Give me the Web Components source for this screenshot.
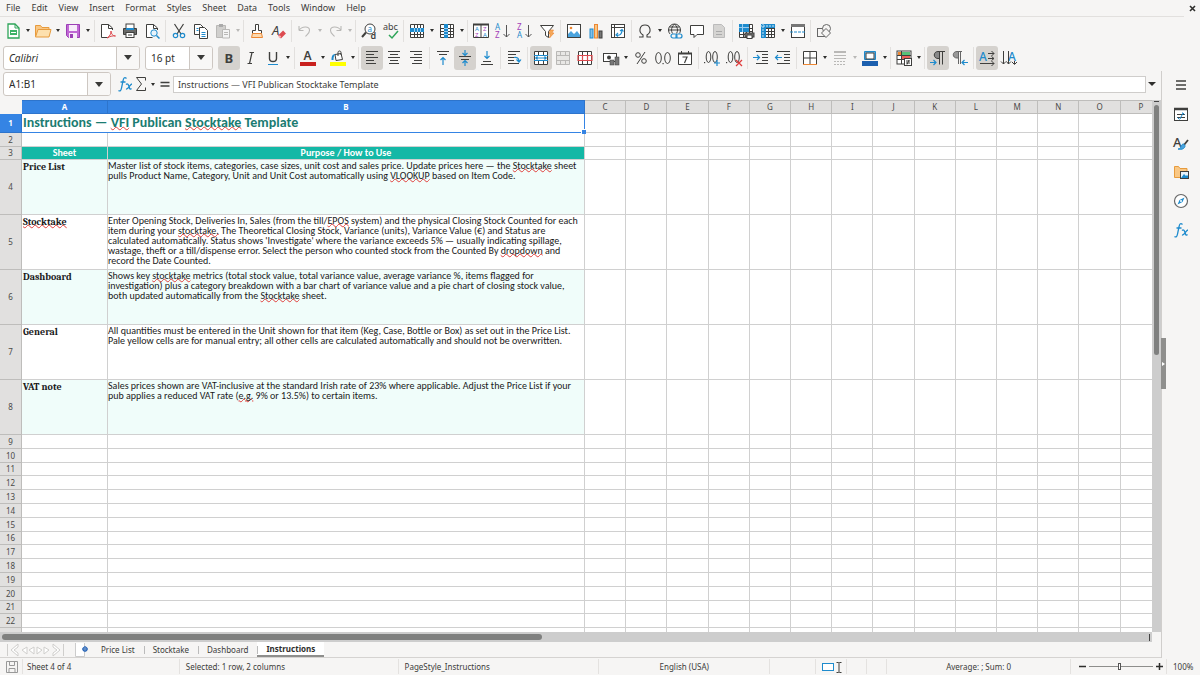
<!DOCTYPE html>
<html lang="en">
<head>
<meta charset="utf-8">
<title>VFI Publican Stocktake Template</title>
<style>
html,body{margin:0;height:100%}
body{font-family:"Noto Sans","Open Sans",sans-serif;font-size:9px;color:#3c3c3a;background:#f6f5f4;overflow:hidden}
</style>
</head>
<body>
<calc-app></calc-app>
<script>
const K='#3f3f3d',B='#1e8bcd',G='#b9b8b6';
const st=(c,w=1)=>`fill="none" stroke="${c}" stroke-width="${w}"`;
const lines=(a,c=K)=>`<path ${st(c)} d="${a.map(([x1,x2,y])=>`M${x1} ${y}.5H${x2}`).join('')}"/>`;
const tbl=(c)=>`<rect x="1" y="1" width="14" height="14" fill="#fff"/><path ${st(c)} d="M1.5 1.5h13v13h-13zM1.5 5.5h13M1.5 8.5h13M1.5 11.5h13M5.5 1.5v13M8.5 1.5v13M11.5 1.5v13"/>`;
const merge=(c,f,mid)=>`<rect x="1" y="1" width="14" height="14" fill="${f}"/><path ${st(c)} d="M1.5 1.5h13v13h-13zM1.5 5.5h13M1.5 10.5h13M5.5 1.5v4M10.5 1.5v4M5.5 10.5v4M10.5 10.5v4"/>${mid}`;
const txt=(s,x,y,z,c=K,w=400,style='normal')=>`<text x="${x}" y="${y}" font-size="${z}" fill="${c}" font-weight="${w}" font-style="${style}" font-family="Noto Sans">${s}</text>`;
const az=(a,ca,b,cb)=>txt(a,0,7,8,ca)+txt(b,0,15,8,cb)+`<path ${st('#555')} d="M11.500 2v12M8.500 11l3 3 3-3"/>`;
const P='#a33fb8';
const ICONS={
new:`<path fill="#fff" stroke="#2fa559" stroke-width="1.300" d="M3 1h7l4 4v10H3z"/><path fill="none" stroke="#2fa559" d="M10 1v4h4"/><rect x="5" y="7" width="7" height="5" fill="#3cb266"/><path stroke="#fff" d="M6 9.500h5" fill="none"/>`,
open:`<path fill="#f9c784" stroke="#e79b3c" d="M.5 13.500v-11h5l1.500 2h7v3"/><path fill="#fde0ae" stroke="#e79b3c" d="M.5 14l2.500-7.500h13L14 14z"/>`,
save:`<path fill="#c067d4" stroke="#9b3fb5" d="M1.500 1.500h13v13h-11l-2-2z"/><rect x="4" y="2" width="8" height="6" fill="#f7ecfa"/><rect x="4" y="10" width="8" height="5" fill="#f7ecfa"/><rect x="5" y="11" width="3" height="4" fill="#9b3fb5"/>`,
pdf:`<path fill="#fff" stroke="${K}" d="M12.500 7V5l-4-3.500h-7v13h7"/><path ${st(K)} d="M8.500 1.500v4h4"/><path ${st('#dd4b50',1)} d="M7 15c3-2 4-4 4-7 0 3 2 5 4.500 5-3-.5-6 .5-8.500 2z"/>`,
print:`<rect x="4" y="1" width="8" height="5" fill="#fff" stroke="${K}"/><path fill="#6a6a68" stroke="${K}" d="M1.500 5.500h13v6h-13z"/><path stroke="${B}" stroke-width="2" d="M4 6h8"/><rect x="4" y="9.500" width="8" height="5" fill="#fff" stroke="${K}"/><path stroke="${K}" d="M6 12h4"/>`,
preview:`<path fill="#fff" stroke="${K}" d="M13.500 7V5l-4-3.500h-7v13h6"/><path ${st(K)} d="M9.500 1.500v4h4"/><circle cx="10" cy="10" r="3.200" fill="#e7f3fb" stroke="${B}"/><path stroke="${B}" stroke-width="1.500" d="M12.500 12.500l3 3"/>`,
cut:`<path ${st(K,1.2)} d="M3.500 1l6.500 10M12.500 1L6 11"/><circle cx="4.500" cy="12.500" r="2.200" ${st(B,1.2)}/><circle cx="11.500" cy="12.500" r="2.200" ${st(B,1.2)}/>`,
copy:`<path fill="#fff" stroke="${K}" d="M1.500 1.500h6l3 3v7h-9z"/><path fill="#fff" stroke="${K}" d="M6.500 4.500h5l3 3v8h-8z"/><path stroke="${B}" d="M8.500 9.500h4M8.500 11.500h4M8.500 13.500h4M3.500 5.500h2M3.500 7.500h2"/>`,
paste:`<path fill="#d0cfcd" stroke="${G}" d="M1.500 2.500h9v12h-9z"/><rect x="4" y="1" width="4" height="3" fill="#aaa"/><path fill="#f4f4f4" stroke="${G}" d="M7.500 6.500h7v8.500h-7z"/><path stroke="${G}" d="M9 9.500h4M9 11.500h4"/>`,
brush:`<path fill="#fff" stroke="${K}" d="M6.500 1.500h3v6h3v3h-9v-3h3z"/><path fill="#fbd9b0" stroke="#ed8733" d="M3.500 10.500h9l1 4h-11z"/>`,
clear:`${txt('A',1,12,13,K,400,'italic')}<path stroke="#dd4b50" stroke-width="4" d="M8.500 14l5-5"/><path stroke="#f9b3b6" stroke-width="2" d="M8 14.500l1.500-1.500"/>`,
undo:`<path ${st(G,1.1)} d="M2 7.500h4.500M2 7.500V3M2 7.500c3-5 11-4.500 10.500 0 0 2.500-2 3.500-4 6"/>`,
redo:`<path ${st(G,1.1)} d="M14 7.500H9.500M14 7.500V3M14 7.500c-3-5-11-4.500-10.500 0 0 2.500 2 3.500 4 6"/>`,
find:`<circle cx="9" cy="6" r="5" fill="#fff" stroke="${K}"/><path stroke="${K}" stroke-width="2" d="M5 9.500L1 14"/>${txt('a',6.5,9,8,B)}${txt('d',9.5,16,9,K,600)}`,
spell:`${txt('abc',0,7,9)}<path ${st('#2fa559',1.5)} d="M6 12l3 3 6-7"/>`,
row:`${tbl(K)}<rect x="1" y="5" width="14" height="4" fill="${B}"/><path stroke="#9ccdf0" d="M5.500 5v4M8.500 5v4M11.500 5v4"/>`,
col:`${tbl(K)}<rect x="5" y="1" width="4" height="14" fill="${B}"/><path stroke="#9ccdf0" d="M5 5.500h4M5 8.500h4M5 11.500h4"/>`,
sort:`<path fill="#fff" stroke="${K}" d="M.5 1.500h15v13H.5z"/><path stroke="${K}" stroke-width="2" d="M0 1.500h16"/><path stroke="${K}" d="M8 2v12"/>${txt('A',2,8,6,B)}${txt('Z',2,14,6,P)}${txt('Z',10,8,6,P)}${txt('A',10,14,6,B)}`,
az:az('A',B,'Z',P),
za:az('Z',P,'A',B),
filter:`<path fill="#fff" stroke="${K}" d="M1.500 2.500h13l-5 6v6l-3-2v-4z"/><path fill="#f6a95a" stroke="#ed8733" stroke-width=".6" d="M11 7h3.500L13 10h2l-4.500 5 1-4H10z"/>`,
image:`<rect x="1.500" y="1.500" width="13" height="13" fill="#fff" stroke="${K}"/><path fill="#4aa3dd" d="M2 14v-3l3-3 3 3 3-3 3 4v2z"/><circle cx="5" cy="5" r="1.300" fill="#ed8733"/>`,
chart:`<rect x="2" y="6" width="3" height="9" fill="#83bfe8" stroke="${B}"/><rect x="6.500" y="1.500" width="3" height="13.500" fill="#f9c784" stroke="#ed8733"/><rect x="11" y="8" width="3" height="7" fill="#777" stroke="${K}"/>`,
pivot:`<rect x="1.500" y="1.500" width="13" height="13" fill="#fff" stroke="${K}"/><path stroke="${K}" d="M2 4.500h12M4.500 2v12"/><path ${st(B,1.2)} d="M6 12c4 1 6-1 6-5M10 8l2-1.500 1.500 2M8 10l-2 2 2 1.500"/>`,
omega:`<path ${st(K,1.1)} d="M2 14h4v-2C1 9 2.500 2 8 2s7 7 2 10v2h4"/>`,
link:`<circle cx="7.500" cy="7" r="6" ${st(K)}/><path ${st(K)} d="M1.500 7h12M2.500 4h10M7.500 1c-4 4-4 8 0 12M7.500 1c4 4 4 8 0 12"/><rect x="3" y="10.500" width="14" height="5.500" fill="#f6f5f4"/><rect x="4" y="11" width="6" height="4" rx="2" ${st(B,1.2)}/><rect x="9" y="11" width="6" height="4" rx="2" ${st(B,1.2)}/>`,
comment:`<path fill="#fff" stroke="${K}" d="M1.500 2.500h13v9H8l-3 3v-3H1.500z"/>`,
header:`<path fill="#d5d4d2" stroke="#bbb" d="M2.500 1.500h8l3 3v10h-11z"/><path stroke="#aaa" d="M5 11.500h6M5 8.500h6"/>`,
area:`${tbl(K)}<rect x="1" y="1" width="10" height="8" fill="${B}"/><path stroke="#9ccdf0" d="M1 4.500h10M4.500 1v8"/><rect x="7" y="10" width="9" height="4" fill="#777" stroke="${K}"/><rect x="9" y="12" width="5" height="3.500" fill="#fff" stroke="${K}"/>`,
freeze:`${tbl(K)}<path fill="${B}" d="M1 1h14v4H6v10H1z"/><path stroke="#cfe8f8" stroke-dasharray="2 1" d="M3 0v16M0 3h16" fill="none"/>`,
split:`<rect x="1.500" y="1.500" width="13" height="13" fill="#fff" stroke="${K}"/><rect x="1" y="1" width="14" height="3" fill="#777"/><path stroke="${B}" stroke-dasharray="3 1" d="M0 9h16"/>`,
shapes:`<rect x="1.500" y="5.500" width="8" height="8" ${st('#666')}/><circle cx="10.500" cy="5.500" r="4" fill="#f6f5f4" stroke="#666"/><path fill="#f6f5f4" stroke="#666" d="M10 5.500l4.500 4.500-4.500 4.500L5.500 10z"/>`,
bold:txt('B',3.5,13,13,K,700),
italic:`<path ${st(K,1.2)} d="M6.500 2.500h4.500M4.500 13.500h4.500M9 2.500l-2.500 11"/>`,
underline:`<path ${st(K,1.4)} d="M4.500 2v6.500c0 4 7 4 7 0V2"/><path stroke="${B}" d="M3 14.500h10"/>`,
fcolor:`${txt('A',3.5,10,12,K,600)}<rect x="0" y="12" width="16" height="4" fill="#c9211e"/>`,
hcolor:`<path fill="#fff" stroke="${K}" d="M5 4.500l6-1 1.500 6-6.500 1z"/><path ${st(K)} d="M8 6V2.500c0-2 3-2 3 0V5"/><path fill="${B}" d="M1.500 10c0-4 1-6 4-6-2 2-2 4-2 6z"/><rect x="0" y="12" width="16" height="4" fill="#ffff00"/>`,
left:lines([[2,14,1],[2,10,4],[2,14,7],[2,10,10],[2,12,13]]),
center:lines([[2,14,1],[4,12,4],[2,14,7],[4,12,10],[3,13,13]]),
right:lines([[2,14,1],[6,14,4],[2,14,7],[6,14,10],[4,14,13]]),
top:lines([[2,14,1],[4,12,4]])+`<path ${st(B,1.2)} d="M8 15V7.500M5.500 10L8 7.500l2.500 2.500"/>`,
middle:lines([[2,14,6],[4,12,9]])+`<path ${st(B,1.2)} d="M8 0v5M5.500 3L8 5.500 10.500 3M8 16v-5M5.500 13L8 10.500l2.500 2.500"/>`,
bottom:lines([[4,12,11],[2,14,14]])+`<path ${st(B,1.2)} d="M8 1v7.500M5.500 6L8 8.500 10.500 6"/>`,
wrap:lines([[2,14,1],[2,10,4],[2,8,7],[2,8,10],[2,13,13]])+`<path ${st(B,1.2)} d="M8 7.500c3-.5 5 .5 5 4M10.500 9.500l2.500 2.500 2-2.500"/>`,
merge1:merge(K,'#fff',`<path stroke="${B}" stroke-width="1.200" fill="none" d="M2 8h12M4.500 6.500L3 8l1.500 1.500M11.500 6.500L13 8l-1.500 1.500M1 5.500h14M1 10.500h14"/>`),
merge2:merge(G,'#e8e7e5',''),
merge3:merge(K,'#fff',`<path ${st('#dd4b50',1.2)} d="M1 5.500h14v5H1zM5.500 5v6M10.500 5v6"/>`),
currency:`<rect x=".5" y="3.500" width="13" height="8" fill="#fff" stroke="${K}"/><circle cx="6" cy="7.500" r="2" fill="${K}"/><rect x="7" y="10" width="4" height="5" fill="#777" stroke="${K}" stroke-width=".5"/><rect x="12" y="7" width="4" height="8" fill="#777" stroke="${K}" stroke-width=".5"/>`,
percent:`<circle cx="5" cy="5" r="2.300" ${st(K)}/><circle cx="11" cy="11" r="2.300" ${st(K)}/><path stroke="${K}" d="M12 2L4 14"/>`,
number:`<ellipse cx="3.500" cy="8" rx="2.800" ry="5.500" ${st(K)}/><ellipse cx="12.500" cy="8" rx="2.800" ry="5.500" ${st(K)}/><rect x="7.500" y="13" width="1.200" height="1.200" fill="${K}"/>`,
date:`<path fill="#fff" stroke="${K}" d="M1.500 3.500h13v11h-13z"/><path stroke="${K}" stroke-width="2" d="M1 3.500h14"/><path stroke="${K}" d="M4.500 1v3M11.500 1v3"/><path ${st(K,1.2)} d="M5.500 7h4.500l-2.500 6"/>`,
decadd:`<ellipse cx="4.500" cy="7" rx="2.300" ry="5.500" ${st(K)}/><ellipse cx="11" cy="7" rx="2.300" ry="5.500" ${st(K)}/><rect x="0" y="12" width="1.200" height="1.200" fill="${K}"/><path stroke="${B}" stroke-width="1.200" d="M13 10v6M10 13h6"/>`,
decrem:`<ellipse cx="4.500" cy="7" rx="2.300" ry="5.500" ${st(K)}/><ellipse cx="11" cy="7" rx="2.300" ry="5.500" ${st(K)}/><rect x="0" y="12" width="1.200" height="1.200" fill="${K}"/><path stroke="#e03c3c" stroke-width="1.300" d="M10 10l6 6M16 10l-6 6"/>`,
indent:lines([[3,15,1],[9,15,4],[9,15,7],[9,15,10],[3,15,13]])+`<path ${st(B,1.2)} d="M0 7.500h6.500M4 5l2.500 2.500L4 10"/>`,
outdent:lines([[2,15,1],[9,15,4],[9,15,7],[9,15,10],[2,15,13]])+`<path ${st(B,1.2)} d="M7 7.500H.5M3 5L.5 7.500 3 10"/>`,
border:`<path fill="#fff" stroke="${K}" d="M1.500 1.500h13v13h-13zM8 1.500v13M1.500 8h13"/><path stroke="#ed8733" d="M1 14.500h14"/>`,
bstyle:`<path stroke="${G}" stroke-width="2" d="M2 2h12"/><path stroke="${G}" d="M2 5.500h12M2 8.500h12"/><path stroke="${G}" stroke-dasharray="2 1" d="M2 11.500h12M2 14.500h12"/>`,
bcolor:`<path fill="#83bfe8" stroke="${B}" d="M2.500 1.500h11v8h-11z"/><rect x="4" y="3" width="8" height="6" fill="#fff" stroke="${K}"/><rect x="0" y="11" width="16" height="5" fill="#1c5fae"/>`,
cond:`<rect x="1" y="1" width="14" height="13" fill="#fff" stroke="${K}"/><rect x="6" y="2" width="8" height="3" fill="#58c078"/><rect x="6" y="6" width="8" height="3" fill="#e9605a"/><rect x="2" y="2" width="3" height="3" fill="#ed8733"/><path stroke="${K}" d="M1 5.500h14M5.500 1v13M1 9.500h8"/><rect x="8.500" y="8.500" width="7" height="7" fill="#fff" stroke="${K}"/><path stroke="${K}" d="M10 11h4M10 13h4M13 10l-2 4.500"/>`,
ltr:`<path fill="#888" stroke="${K}" stroke-width="1" d="M9.500 9V1.500H8c-5 0-5 7 0 7h1.500"/><path ${st(K)} d="M9.500 14.500v-13H15M12.500 1.500v13"/><path ${st(B,1.2)} d="M0 12.500h6M3.500 10L6 12.500 3.500 15"/>`,
rtl:`<path fill="#999" stroke="#666" d="M6.500 8V1.500H5c-5 0-5 6.500 0 6.500h1.500"/><path ${st('#666')} d="M6.500 14V1.500H10M8.500 1.500V14"/><path ${st(B,1.2)} d="M16 12.500h-6M12.500 10L10 12.500l2.500 2.500"/>`,
hdir:`${txt('A',0,11,12,B,500)}<path ${st(K)} d="M9 3.500h6M12.500 1L15 3.500 12.500 6M9 8.500h6M12.500 6.500L15 8.500l-2.500 2M1 13.500h14M12.500 11L15 13.500 12.500 16"/>`,
vdir:`${txt('A',7,11,12,B,500)}<path ${st(K)} d="M2.500 1v13M0 11.500L2.500 14 5 11.500M7.500 1v13M5.500 11.500L7.500 14l2.500-2.500M13.500 11v3M11 12l2.500 2.500L16 12"/>`,
menu:`<path stroke="${K}" stroke-width="1.500" d="M3 4h10M3 8h10M3 12h10"/>`,
props:`<rect x="1.500" y="2.500" width="13" height="12" fill="#fff" stroke="${K}"/><path stroke="${K}" stroke-width="2.500" d="M1 3h14"/><path stroke="${K}" d="M4 8.500h8M4 11.500h8"/><path ${st(B)} d="M9.500 6.500l2 2M6.500 13.500l-2-2M10 7l-3 6"/>`,
styles:`${txt('A',0,12,13,K,500)}<path stroke="${K}" stroke-width="1.800" d="M15 5l-4 5"/><path fill="#4aa3dd" stroke="${B}" d="M10.500 9c2 1 2 3 0 4.500-1.500 1-4 1-5.500.5 2 0 2.500-1 3-3 .5-1 1.500-2 2.500-2z"/>`,
gallery:`<path fill="#f9c784" stroke="#e79b3c" d="M1.500 13.500v-11h4l1.500 2h7v9z"/><rect x="7.500" y="7.500" width="8" height="7" fill="#e7f3fb" stroke="${K}"/><path fill="${B}" d="M8 14l3-4 2 2 1-1 1 1v2z"/>`,
nav:`<circle cx="8" cy="8" r="6.500" fill="#fff" stroke="#666" stroke-width="1.200"/><path fill="${B}" d="M11.500 4.500L9.500 9l-5 2.500L6.500 7z"/><circle cx="8" cy="8" r="1" fill="#fff"/>`,
fx:`<path ${st(B,1.3)} d="M9.500 2.500C7.500.5 6.500 2 6 5L4.500 12c-.5 3-1.500 3.500-3 2.500M3.500 6h5"/><path ${st(B,1.3)} d="M9 8.500c1.500-1.500 2.500 0 3 2s1 3.500 2.500 2M15 8c-2 0-3.500 5.500-6 5"/>`,
sum:`<path ${st(K)} d="M12.500 4.500v-3h-9l5 6.500-5 6.500h9v-3"/>`,
equal:`<path stroke="${K}" stroke-width="1.500" d="M3.500 6.500h9M3.500 10h9"/>`,
savedoc:`<path ${st('#999')} d="M2.500 2.500h11v11h-11zM5.500 2.500v4h5v-4M5 13.500v-4h6v4"/>`,
addsheet:`<path fill="#fff" stroke="#ccc" d="M1.500 1v13.500h9V1"/><circle cx="11" cy="7" r="2" fill="#fff" stroke="#2d68b8" stroke-width="1.200"/><path stroke="#2d68b8" d="M11 4v6M8 7h6"/>`,
first:`<path fill="#fff" stroke="#cfcecc" d="M2.500 2v12M13 2L6 8l7 6v-3L9 8l4-3z"/>`,
prev:`<path fill="#fff" stroke="#cfcecc" d="M7 5L2 8l5 4zM14 5L9 8l5 4z"/>`,
next:`<path fill="#fff" stroke="#cfcecc" d="M2 5l5 3-5 4zM9 5l5 3-5 4z"/>`,
last:`<path fill="#fff" stroke="#cfcecc" d="M13.500 2v12M3 2l7 6-7 6v-3l4-3-4-3z"/>`,
selmode:`<rect x="2.500" y="4.500" width="11" height="7" fill="#fff" stroke="${B}"/>`,
insmode:`<path ${st(K)} d="M5.500 3.500h2l.5.500.5-.5h2M5.500 13.500h2l.5-.5.5.5h2M8 4v9"/>`
};
function define(name,html,setup){
  const t=document.createElement('template');t.innerHTML=html;
  customElements.define(name,class extends HTMLElement{
    connectedCallback(){
      if(this.shadowRoot)return;
      this.attachShadow({mode:'open'}).append(t.content.cloneNode(true));
      if(setup)setup(this,this.shadowRoot);
    }
  });
}
customElements.define('ui-icon',class extends HTMLElement{
  static observedAttributes=['name'];
  connectedCallback(){this.draw()}
  attributeChangedCallback(){if(this.isConnected)this.draw()}
  draw(){
    if(!this.shadowRoot)this.attachShadow({mode:'open'});
    this.shadowRoot.innerHTML=`<style>:host{display:block;width:16px;height:16px;flex:none}svg{display:block;overflow:visible}</style><svg width="16" height="16" viewBox="0 0 16 16" aria-hidden="true">${ICONS[this.getAttribute('name')]||''}</svg>`;
  }
});

define('tool-button',`<style>
:host{display:flex;align-items:center;flex:none}
button{border:0;background:none;padding:0;margin:0;display:flex;align-items:center;justify-content:center;height:24px}
.main{width:var(--button-width,22px);border-radius:3px}
:host([pressed]) .main{background:#d5d2ce}
.more{width:8px;display:none}
:host([menu]) .more{display:flex}
.more::before{content:"";border:solid transparent;border-width:3px 2px 0;border-top-color:#2e2e2c}
:host([off]) .more::before{border-top-color:#b9b8b6}
</style><button class="main"><ui-icon></ui-icon></button><button class="more" aria-label="More options"></button>`,
 (h,r)=>{const b=r.querySelector('.main');b.setAttribute('aria-label',h.getAttribute('label')||h.getAttribute('icon'));
  if(h.hasAttribute('pressed'))b.setAttribute('aria-pressed','true');
  r.querySelector('ui-icon').setAttribute('name',h.getAttribute('icon'))});

define('tool-sep',`<style>:host{display:block;flex:none;width:1px;height:22px;margin:0 2px 0 1px;background:#e2e0de}:host([wide]){margin:0 2px}</style>`);

define('tool-bar',`<style>:host{display:flex;align-items:center;height:27px}</style><slot></slot>`);

define('combo-box',`<style>
:host{display:flex;position:relative;box-sizing:border-box;height:24px;border:1px solid #cdc7c2;border-radius:3px;background:#fff;flex:none;overflow:hidden}
select{appearance:none;border:0;margin:0;background:none;outline:0;width:100%;padding:0 24px 0 5px;font:10px "Noto Sans",sans-serif;color:#2e2e2c;min-width:0}
:host([italic]) select{font-style:italic}
i{position:absolute;right:0;top:0;bottom:0;width:22px;border-left:1px solid #cdc7c2;background:#f8f7f6;display:grid;place-items:center;pointer-events:none}
i::before{content:"";border:solid transparent;border-width:5px 4px 0;border-top-color:#3a3a38}
</style><select><option></option></select><i></i>`,
 (h,r)=>{r.querySelector('option').textContent=h.getAttribute('value');r.querySelector('select').setAttribute('aria-label',h.getAttribute('label'))});

define('menu-bar',`<style>
:host{display:flex;align-items:stretch;height:17px}
nav{flex:1;display:flex;gap:11px;padding-left:6px;border-bottom:1px solid #e2e0de;box-sizing:border-box;align-items:center}
button{border:0;background:none;padding:0;margin:0;font:9px/14px "Noto Sans",sans-serif;color:#3c3c3a}
.close{width:16px}
</style><nav></nav><button class="close" aria-label="Close document"><svg width="7" height="7" viewBox="0 0 7 7"><path d="M1 1l5 5M6 1L1 6" stroke="#2e2e2c" stroke-width="1.600"/></svg></button>`,
 (h,r)=>{r.querySelector('nav').innerHTML=h.getAttribute('items').split(',').map(s=>`<button>${s}</button>`).join('')});

define('formula-bar',`<style>
:host{display:flex;align-items:center;height:26px;padding:0 4px 3px 3px;--button-width:16px}
combo-box{width:108px;margin-right:6px}
input{flex:1;min-width:0;height:17px;box-sizing:border-box;border:1px solid #cfcdcb;background:#fff;padding:0 4px;margin:0;font:9px "Noto Sans",sans-serif;color:#3c3c3a;outline:0}
button{border:0;background:none;padding:0;width:11px;height:17px;display:grid;place-items:center}
button::before{content:"";border:solid transparent;border-width:4px 4px 0;border-top-color:#2e2e2c}
</style>
<combo-box value="A1:B1" label="Name box"></combo-box>
<tool-button icon="fx" label="Function wizard"></tool-button><tool-button icon="sum" label="Select function" menu></tool-button><tool-button icon="equal" label="Formula"></tool-button>
<input aria-label="Input line" value="Instructions — VFI Publican Stocktake Template"><button aria-label="Expand formula bar"></button>`);

const S=w=>`<span class="sp">${w}</span>`;
const DATA=[
['Price List',`Master list of stock items, categories, case sizes, unit cost and sales price. Update prices here — the ${S('Stocktake')} sheet<br>pulls Product Name, Category, Unit and Unit Cost automatically using ${S('VLOOKUP')} based on Item Code.`],
[S('Stocktake'),`Enter Opening Stock, Deliveries In, Sales (from the till/${S('EPOS')} system) and the physical Closing Stock Counted for each<br>item during your ${S('stocktake.')} The Theoretical Closing Stock, Variance (units), Variance Value (€) and Status are<br>calculated automatically. Status shows 'Investigate' where the variance exceeds 5% — usually indicating spillage,<br>wastage, theft or a till/dispense error. Select the person who counted stock from the Counted By ${S('dropdown')} and<br>record the Date Counted.`],
['Dashboard',`Shows key ${S('stocktake')} metrics (total stock value, total variance value, average variance %, items flagged for<br>investigation) plus a category breakdown with a bar chart of variance value and a pie chart of closing stock value,<br>both updated automatically from the ${S('Stocktake')} sheet.`],
['General',`All quantities must be entered in the Unit shown for that item (Keg, Case, Bottle or Box) as set out in the Price List.<br>Pale yellow cells are for manual entry; all other cells are calculated automatically and should not be overwritten.`],
['VAT note',`Sales prices shown are VAT-inclusive at the standard Irish rate of 23% where applicable. Adjust the Price List if your<br>pub applies a reduced VAT rate (${S('e.g.')} 9% or 13.5%) to certain items.`]];
define('sheet-grid',`<style>
:host{display:block;flex:1;min-width:0;overflow:hidden;background:#fff}
table{border-collapse:separate;border-spacing:0;table-layout:fixed;width:calc(100% + 10px)}
.rh{width:22px}.ca{width:86px}.cb{width:477px}
th,td{box-sizing:border-box;padding:0;border:solid #d0d0d0;border-width:0 1px 1px 0;height:14px;line-height:10px;white-space:nowrap}
th{background:#e1e0df;border-color:#bebdbb;font:8px/10px "Noto Sans",sans-serif;color:#4a4a48;text-align:center}
thead th{border-top:1px solid #bebdbb}
thead th:first-child{background:#f6f5f4;border-color:#f6f5f4}
th.on{background:#3584e4;color:#fff;font-weight:700;border-color:#2d74cc}
tr.short>*{height:13px}
tr.first>*{height:19px}
tr.note>*{height:55px}
td.title{position:relative;border:solid #3584e4;border-width:0 1px 1px 0;color:#1b7c72;font:700 14px/17px Carlito,Lato,sans-serif;vertical-align:top;padding-left:1px}
td.title::after{content:"";position:absolute;right:-2px;bottom:-2px;width:4px;height:4px;background:#3584e4;border:solid #fff;border-width:1px 0 0 1px}
td.hd{background:#14b8a6;color:#fff;font:700 10px/11px Carlito,Lato,sans-serif;text-align:center;vertical-align:top}
.note td{vertical-align:top;font:10px/10px Carlito,Lato,sans-serif;color:#1a1a1a}
.note .b{padding-top:1px}
.note .a{font:700 10px/14px Caladea,"Liberation Serif",serif;padding-left:1px}
.tint td.a,.tint td.b{background:#f0fdfa}
.sp{text-decoration:underline wavy #e0403c 1px;text-underline-offset:-1px;text-decoration-skip-ink:none}
</style><table aria-label="Instructions sheet"><colgroup><col class="rh"><col class="ca"><col class="cb"></colgroup><thead></thead><tbody></tbody></table>`,
 (h,r)=>{
  const cols='CDEFGHIJKLMNOP'.split('');
  r.querySelector('colgroup').insertAdjacentHTML('beforeend',cols.map(()=>'<col>').join(''));
  r.querySelector('thead').innerHTML=`<tr><th></th><th class="on">A</th><th class="on">B</th>${cols.map(c=>`<th>${c}</th>`).join('')}</tr>`;
  const e=cols.map(()=>'<td></td>').join('');
  let s=`<tr class="first"><th class="on">1</th><td class="title" colspan="2">Instructions — ${S('VFI')} Publican ${S('Stocktake')} Template</td>${e}</tr><tr><th>2</th><td></td><td></td>${e}</tr><tr class="short"><th>3</th><td class="hd">Sheet</td><td class="hd">Purpose / How to Use</td>${e}</tr>`;
  DATA.forEach(([a,b],i)=>{s+=`<tr class="note${i%2?'':' tint'}"><th>${i+4}</th><td class="a">${a}</td><td class="b">${b}</td>${e}</tr>`});
  for(let n=9;n<=23;n++)s+=`<tr${n%5===1?' class="short"':''}><th>${n<23?n:''}</th><td></td><td></td>${e}</tr>`;
  r.querySelector('tbody').innerHTML=s;
 });

define('scroll-v',`<style>:host{display:flex;flex-direction:column;align-items:center;width:9px;background:#cdcdcd;flex:none}
b{width:5px;height:1px;background:#444;margin:1px 0 3px}i{width:5px;height:47%;border-radius:3px;background:#7f807f}</style><b></b><i></i>`);
define('scroll-h',`<style>:host{display:flex;align-items:center;justify-content:space-between;height:10px;background:#cdcdcd;margin-right:9px;padding:0 2px;flex:none}
b{width:1px;height:7px;background:#444}i{width:47%;height:6px;border-radius:3px;background:#7f807f}</style><i></i><b></b>`);

define('sheet-tabs',`<style>
:host{display:flex;height:16px;align-items:stretch;flex:none;padding-left:5px;border-bottom:1px solid #d5d3d1;box-sizing:border-box}
.nav{display:flex;align-items:center;width:62px}
.nav button{width:15px}
button{border:0;background:none;padding:0;margin:0;font:8px/12px "Noto Sans",sans-serif;color:#3c3c3a;display:block}
.add{margin:0 2px 0 7px;width:16px}
.tab{position:relative;padding:0 9px}
.tab+.tab::before{content:"";position:absolute;left:0;top:4px;height:8px;width:1px;background:#bbb}
.tab[aria-selected=true]{background:#fff;font-weight:700;border-bottom:2px solid #8e8e8c;color:#2e2e2c}
[role=tablist]{display:flex}
</style><div class="nav"><button aria-label="First sheet"><ui-icon name="first"></ui-icon></button><button aria-label="Previous sheet"><ui-icon name="prev"></ui-icon></button><button aria-label="Next sheet"><ui-icon name="next"></ui-icon></button><button aria-label="Last sheet"><ui-icon name="last"></ui-icon></button></div><button class="add" aria-label="Add sheet"><ui-icon name="addsheet"></ui-icon></button>
<div role="tablist"><button class="tab" role="tab">Price List</button><button class="tab" role="tab">Stocktake</button><button class="tab" role="tab">Dashboard</button><button class="tab" role="tab" aria-selected="true">Instructions</button></div>`);

define('status-bar',`<style>
:host{display:grid;grid-template-columns:23px 157fr 219fr 201fr 171fr 46px 31px 20px 20px 184fr 96px 33px;height:17px;align-items:center;font-size:8px;line-height:12px;white-space:nowrap;flex:none}
span{box-sizing:border-box;height:15px;line-height:15px;border-right:1px solid #e4e2e0;display:flex;align-items:center;padding:0 6px}
.c{justify-content:center}.n{padding:0 4px}
.m{padding:0 0 0 4px}.m ui-icon+ui-icon{margin-left:-5px}
.z{gap:2px;padding:0 2px 0 7px;justify-content:space-between}
span:last-child{border:0}
button{border:0;background:none;padding:0;width:9px;height:9px;display:grid;place-items:center}
input{appearance:none;background:none;margin:0;flex:1;min-width:0;height:9px}
input::-webkit-slider-runnable-track{height:1px;background:#8e8e8c}
input::-webkit-slider-thumb{appearance:none;width:3px;height:7px;margin-top:-3px;background:#fff;border:1px solid #555;box-sizing:border-box}
</style>
<span class="n"><ui-icon name="savedoc"></ui-icon></span><span class="n">Sheet 4 of 4</span><span>Selected: 1 row, 2 columns</span><span>PageStyle_Instructions</span><span class="c">English (USA)</span><span></span><span class="m"><ui-icon name="selmode"></ui-icon><ui-icon name="insmode"></ui-icon></span><span></span><span></span><span class="c">Average: ; Sum: 0</span>
<span class="z"><button aria-label="Zoom out"><svg width="7" height="7"><path d="M0 3.500h7" stroke="#2e2e2c" stroke-width="1.500"/></svg></button><input type="range" aria-label="Zoom" value="48"><button aria-label="Zoom in"><svg width="7" height="7"><path d="M0 3.500h7M3.500 0v7" stroke="#2e2e2c" stroke-width="1.500"/></svg></button></span><span>100%</span>`);

define('side-bar',`<style>
:host{display:flex;position:relative;flex-direction:column;align-items:center;gap:5px;width:39px;box-sizing:border-box;border-left:1px solid #d0cecc;padding-top:2px;flex:none}
.grip{position:absolute;left:-1px;top:267px;width:5px;height:51px;border:0;padding:0;background:#8f8f8d;display:grid;place-items:center}
.grip::before{content:"";border:solid transparent;border-width:2px 0 2px 3px;border-left-color:#fff}
</style><tool-button icon="menu" label="Sidebar settings"></tool-button><tool-button icon="props" label="Properties"></tool-button><tool-button icon="styles" label="Styles"></tool-button><tool-button icon="gallery" label="Gallery"></tool-button><tool-button icon="nav" label="Navigator"></tool-button><tool-button icon="fx" label="Functions"></tool-button><button class="grip" aria-label="Hide sidebar"></button>`);

const W='<tool-sep wide></tool-sep>',N='<tool-sep></tool-sep>';
const t=list=>list.split(' ').map(x=>{
  if(x==='W')return W;if(x==='N')return N;
  const off=x.includes('-'),m=x.includes('+'),p=x.includes('!');
  return `<tool-button icon="${x.replace(/[-+!]/g,'')}"${m?' menu':''}${off?' off':''}${p?' pressed':''}></tool-button>`}).join('');
define('calc-app',`<style>
:host{display:flex;flex-direction:column;height:100vh}
.std{padding-left:2px}
.fmt{padding-left:3px}
.font{width:137px;margin-right:5px}.size{width:68px;margin-right:5px}
.work{display:flex;flex:1;min-height:0}
.main{display:flex;flex-direction:column;flex:1;min-width:0}
.view{display:flex;flex:1;min-height:0}
</style>
<menu-bar items="File,Edit,View,Insert,Format,Styles,Sheet,Data,Tools,Window,Help"></menu-bar>
<tool-bar class="std">${t('new+ open+ save+ W pdf print preview W cut copy paste-+ N brush clear N undo-+ redo-+ N find spell N row+ col+ N sort az za filter W image chart pivot W omega+ link comment header W area freeze+ split N shapes')}</tool-bar>
<tool-bar class="fmt"><combo-box class="font" italic value="Calibri" label="Font name"></combo-box><combo-box class="size" value="16 pt" label="Font size"></combo-box>${t('bold! italic underline+ W fcolor+ hcolor+ N left! center right W top middle! bottom W wrap W merge1! merge2 merge3 N currency+ percent number date W decadd decrem W indent outdent W border+ bstyle-+ bcolor+ N cond+ N ltr! rtl W hdir! vdir')}</tool-bar>
<div class="work"><div class="main"><formula-bar></formula-bar><div class="view"><sheet-grid></sheet-grid><scroll-v></scroll-v></div><scroll-h></scroll-h><sheet-tabs></sheet-tabs></div><side-bar></side-bar></div>
<status-bar></status-bar>`);
</script>
</body>
</html>
